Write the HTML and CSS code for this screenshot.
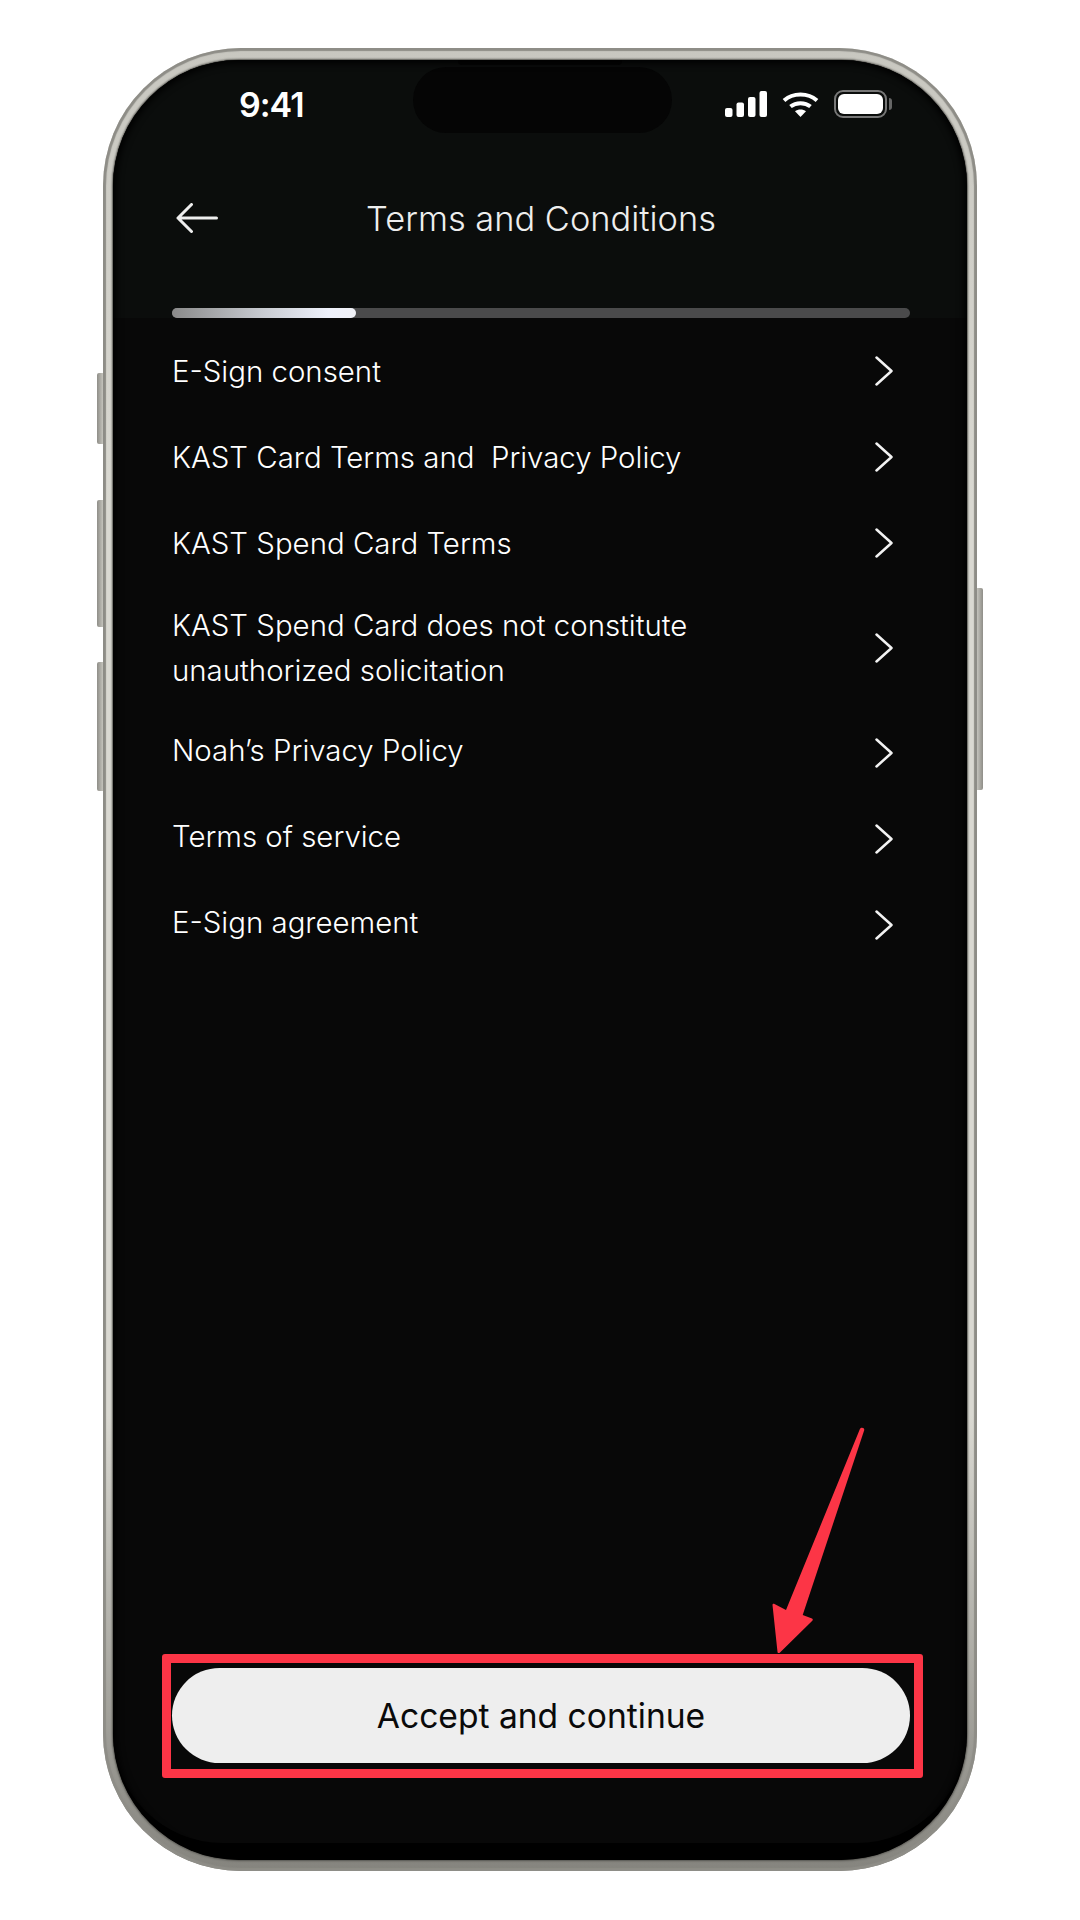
FILE: index.html
```html
<!DOCTYPE html>
<html lang="en">
<head>
  <meta charset="UTF-8" />
  <meta name="viewport" content="width=device-width, initial-scale=1.0"/>
  <title>Terms and Conditions</title>
  <link rel="stylesheet" href="styles.css">
</head>
<body>
  <div class="phone">
    <span class="side-btn mute"></span>
    <span class="side-btn vol-up"></span>
    <span class="side-btn vol-down"></span>
    <span class="side-btn power"></span>

    <div class="screen">
      <div class="speaker"></div>
      <div class="island"></div>

      <div class="top">
        <div class="status">
          <span class="time">9:41</span>
          <div class="status-icons">
            <svg class="signal" width="42" height="26" viewBox="0 0 42 26" fill="#fff">
              <rect x="0" y="17" width="7.5" height="9" rx="2"/>
              <rect x="11.5" y="11.5" width="7.5" height="14.5" rx="2"/>
              <rect x="23" y="6" width="7.5" height="20" rx="2"/>
              <rect x="34.500" y="0" width="7.5" height="26" rx="2"/>
            </svg>
            <svg class="wifi" width="37" height="26" viewBox="0 0 37 26" fill="none" stroke="#fff" stroke-width="4">
              <path d="M2 9.500C11 1.500 26 1.500 35 9.500"/>
              <path d="M8.500 15.500C14 11 23 11 28.500 15.500"/>
              <path d="M18.500 26L13 20.300C16 18 21 18 24 20.300Z" fill="#fff" stroke="none"/>
            </svg>
            <div class="battery">
              <div class="battery-fill"></div>
            </div>
          </div>
        </div>

        <div class="nav">
          <svg class="back" width="42" height="30" viewBox="0 0 42 30" fill="none" stroke="#eee" stroke-width="3" stroke-linecap="round" stroke-linejoin="round">
            <path d="M40.500 15H2M15.500 1.500L2 15l13.500 13.500"/>
          </svg>
          <h1>Terms and Conditions</h1>
        </div>

        <div class="progress"><div class="progress-fill"></div></div>
      </div>

      <div class="content">
        <ul class="list">
          <li class="row"><span>E-Sign consent</span><svg class="chev" viewBox="0 0 18 30"><path d="M1.500 1.500L16.500 15 1.500 28.500"/></svg></li>
          <li class="row"><span>KAST Card Terms and&nbsp; Privacy Policy</span><svg class="chev" viewBox="0 0 18 30"><path d="M1.500 1.500L16.500 15 1.500 28.500"/></svg></li>
          <li class="row"><span>KAST Spend Card Terms</span><svg class="chev" viewBox="0 0 18 30"><path d="M1.500 1.500L16.500 15 1.500 28.500"/></svg></li>
          <li class="row long"><span>KAST Spend Card does not constitute<br>unauthorized solicitation</span><svg class="chev" viewBox="0 0 18 30"><path d="M1.500 1.500L16.500 15 1.500 28.500"/></svg></li>
          <li class="row raised"><span>Noah’s Privacy Policy</span><svg class="chev" viewBox="0 0 18 30"><path d="M1.500 1.500L16.500 15 1.500 28.500"/></svg></li>
          <li class="row raised"><span>Terms of service</span><svg class="chev" viewBox="0 0 18 30"><path d="M1.500 1.500L16.500 15 1.500 28.500"/></svg></li>
          <li class="row raised"><span>E-Sign agreement</span><svg class="chev" viewBox="0 0 18 30"><path d="M1.500 1.500L16.500 15 1.500 28.500"/></svg></li>
        </ul>
        <button class="accept">Accept and continue</button>
      </div>
    </div>
  </div>

  <!-- red markup drawn over the screenshot -->
  <div class="mark-box"></div>
  <svg class="mark-arrow" width="110" height="240" viewBox="0 0 110 240" fill="#fc3546">
    <path d="M92.800 2.300C94 -.2 97.800 .6 97.200 3.200L35.700 188 45 191.500C46 192 46 193 45.300 193.700L13 225.500C12 226.500 10.500 226 10.500 225L5.500 178C5.500 176.800 6.500 176.300 7.500 177L19 183Z"/>
  </svg>
</body>
</html>
```

FILE: styles.css
```css
* {
  box-sizing: border-box;
}
body {
  margin: 0;
  width: 1080px;
  height: 1920px;
  background: #fff;
  padding: 48px 0 0 103px;
  font-family: Inter, "Liberation Sans", sans-serif;
  position: relative;
  overflow: hidden;
}
.phone {
  position: relative;
  width: 874px;
  height: 1823px;
  padding: 12px 10px 11px;
  border-radius: 138px;
  background: linear-gradient(180deg, #c8c7c0 0%, #dad9d2 25%, #dad9d2 75%, #85847e 100%);
  box-shadow: inset 0 0 1px 3px #8e8d87;
}
.side-btn {
  position: absolute;
  width: 6px;
  background: linear-gradient(90deg, #8f8e88, #c4c3bc);
  border-radius: 2px 0 0 2px;
}
.mute { left: -6px; top: 325px; height: 71px; }
.vol-up { left: -6px; top: 452px; height: 127px; }
.vol-down { left: -6px; top: 614px; height: 129px; }
.power {
  right: -6px;
  top: 540px;
  height: 202px;
  border-radius: 0 2px 2px 0;
  background: linear-gradient(270deg, #8f8e88, #c4c3bc);
}
.screen {
  position: relative;
  display: flex;
  flex-direction: column;
  height: 100%;
  border-radius: 126px;
  background: #000;
  overflow: hidden;
  box-shadow: 0 0 2px 1px #55544f;
}
/* dark falloff where the glass meets the frame */
.screen::after {
  content: "";
  position: absolute;
  inset: 0;
  border-radius: inherit;
  box-shadow: inset 0 0 7px 3px #000;
  pointer-events: none;
}
.speaker {
  position: absolute;
  left: 345px;
  top: 0;
  width: 164px;
  height: 5px;
  background: #050505;
  border-radius: 0 0 4px 4px;
}
.island {
  position: absolute;
  left: 300px;
  top: 7px;
  width: 259px;
  height: 66px;
  border-radius: 33px;
  background: #050505;
}
.top {
  background: #0b0d0c;
  height: 258px;
  padding: 0 57px 0 59px;
}
.status {
  display: flex;
  justify-content: space-between;
  align-items: center;
  height: 88px;
  padding-left: 67px;
}
.time {
  color: #fff;
  font-size: 34px;
  font-weight: 600;
  letter-spacing: -1px;
}
.status-icons {
  display: flex;
  align-items: center;
  gap: 15px;
  margin-right: 23px;
}
.battery {
  position: relative;
  width: 53px;
  height: 28px;
  padding: 2px;
  border: 2px solid #777;
  border-radius: 9px;
}
.battery::after {
  content: "";
  position: absolute;
  right: -7px;
  top: 6px;
  width: 3px;
  height: 12px;
  border-radius: 0 3px 3px 0;
  background: #666;
}
.battery-fill {
  height: 100%;
  border-radius: 6px;
  background: #fff;
}
.nav {
  position: relative;
  display: flex;
  align-items: center;
  justify-content: center;
  margin-top: 40px;
  height: 60px;
}
.back {
  position: absolute;
  left: 4px;
  top: 15px;
}
h1 {
  margin: 0;
  color: #eee;
  font-size: 34.400px;
  font-weight: 300;
}
.progress {
  margin-top: 60px;
  height: 10px;
  border-radius: 5px;
  background: #4a4a4b;
}
.progress-fill {
  width: 184px;
  height: 100%;
  border-radius: 5px;
  background: linear-gradient(90deg, #8a8a8a, #c9ccd2 50%, #eef1fb 85%, #f0f1f6);
}
.content {
  display: flex;
  flex: 1;
  flex-direction: column;
  padding: 25px 57px 80px 59px;
  background: #080808;
  border-radius: 0 0 110px 110px;
  margin-bottom: 17px;
}
.list {
  display: flex;
  flex: 1;
  flex-direction: column;
  gap: 30px;
  margin: 0;
  padding: 0;
  list-style: none;
}
.row {
  display: flex;
  align-items: center;
  justify-content: space-between;
  min-height: 56px;
  color: #fff;
  font-size: 29.400px;
  font-weight: 300;
  line-height: 45px;
}
.row.long {
  padding: 2px 0;
}
.row.raised span {
  margin-top: -6px;
}
.chev {
  width: 18px;
  height: 30px;
  margin-right: 17px;
  fill: none;
  stroke: #f2f2f2;
  stroke-width: 2.500;
  stroke-linecap: round;
  stroke-linejoin: round;
}
.accept {
  height: 95px;
  border: 0;
  border-radius: 48px;
  background: #eee;
  color: #0a0a0a;
  font-family: inherit;
  font-size: 33.600px;
  font-weight: 400;
}
.mark-box {
  position: absolute;
  left: 162px;
  top: 1654px;
  width: 761px;
  height: 124px;
  border: 9.500px solid #fc3546;
  border-radius: 3px;
}
.mark-arrow {
  position: absolute;
  left: 767px;
  top: 1427px;
}
```
